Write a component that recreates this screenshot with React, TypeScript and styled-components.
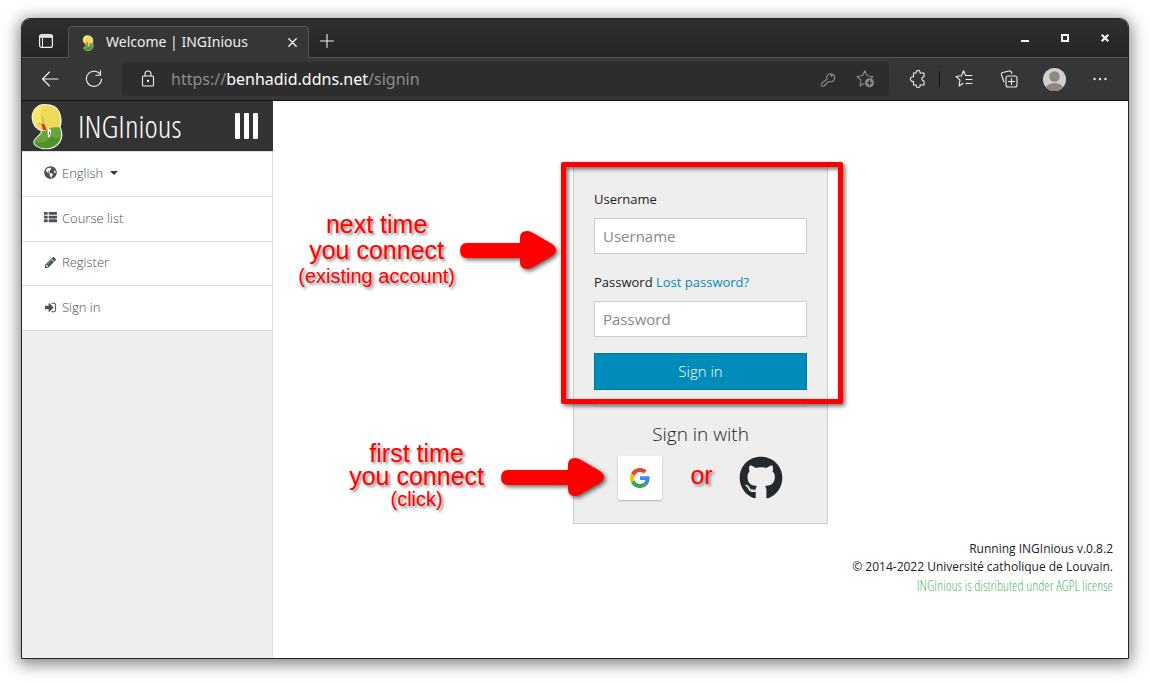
import React from 'react';
import styled, { createGlobalStyle } from 'styled-components';
import { FaGithub, FaGlobeAmericas } from 'react-icons/fa';

const Global = createGlobalStyle`
  *, *::before, *::after { box-sizing: border-box; }
  body { margin: 0; background: #fff; font-family: "Open Sans", sans-serif; font-size: 13px; color: #222; }
  button { font: inherit; color: inherit; background: none; border: 0; padding: 0; cursor: pointer; }
  a { text-decoration: none; color: inherit; }
  svg { display: block; flex: none; }
`;

const narrow = '"Open Sans Condensed Light", "Yanone Kaffeesatz", "Liberation Sans Narrow", "Open Sans", sans-serif';

const Desktop = styled.div`
  display: flex;
  min-height: 100vh;
  padding: 18px 21px 24px;
`;

const Window = styled.div`
  flex: 1;
  display: flex;
  flex-direction: column;
  border: 1px solid #242424;
  border-radius: 9px 9px 0 0;
  background: #fff;
  box-shadow: 0 3px 16px 2px rgba(0, 0, 0, 0.5);
`;

const TabBar = styled.div`
  display: flex;
  align-items: flex-end;
  height: 39px;
  padding: 0 5px 0 6px;
  border-bottom: 1px solid #555;
  border-radius: 8px 8px 0 0;
  background: linear-gradient(#2e2e2e, #262626);
  color: #eee;
`;

const TabAction = styled.button`
  display: flex;
  align-items: center;
  justify-content: center;
  width: 36px;
  height: 32px;
`;

const Tab = styled.div`
  display: flex;
  align-items: center;
  width: 241px;
  height: 32px;
  margin: 0 0 -1px 4px;
  padding: 0 11px 0 13px;
  border: 1px solid #555;
  border-bottom: 0;
  border-radius: 4px 4px 0 0;
  background: #363636;
  font: 14px "Noto Sans", sans-serif;
`;

const TabTitle = styled.span`
  flex: 1;
  padding: 0 0 2px 12px;
`;

const WindowControls = styled.div`
  display: flex;
  align-self: center;
  margin-left: auto;
  gap: 4px;
`;

const ControlButton = styled.button`
  display: flex;
  align-items: center;
  justify-content: center;
  width: 36px;
  height: 36px;
  color: #fff;
`;

const Toolbar = styled.div`
  display: flex;
  align-items: center;
  height: 43px;
  padding: 0 6px 0 10px;
  border-bottom: 1px solid #111;
  background: #363636;
  color: #eee;
`;

const ToolButton = styled.button<{ $w?: number }>`
  display: flex;
  align-items: center;
  justify-content: center;
  width: ${(p) => p.$w ?? 44}px;
  height: 34px;
`;

const AddressBar = styled.div`
  flex: 1;
  display: flex;
  align-items: center;
  height: 34px;
  margin: 0 7px 0 2px;
  padding-right: 5px;
  border-radius: 4px;
  background: #2d2d2d;
  color: #8c8c8c;
`;

const LockIcon = styled.span`
  padding: 0 16px 0 19px;
  color: #eee;
`;

const Address = styled.span`
  flex: 1;
  padding-bottom: 1px;
  font: 16px "Noto Sans", sans-serif;
  b { font-weight: 400; color: #fff; }
`;

const Divider = styled.span`
  width: 1px;
  height: 16px;
  background: #111;
`;

const Page = styled.div`
  flex: 1;
  display: flex;
`;

const Sidebar = styled.nav`
  width: 251px;
  flex: none;
  border-right: 1px solid #ddd;
  background: #eee;
`;

const Brand = styled.header`
  display: flex;
  align-items: center;
  height: 50px;
  margin-right: -1px;
  padding: 0 15px 0 8px;
  background: #333;
  color: #fff;
`;

const BrandName = styled.a`
  flex: 1;
  padding-left: 15px;
  font: 300 32px/44px ${narrow};
`;

const MenuButton = styled.button`
  display: flex;
  gap: 4px;
  span { width: 5px; height: 26px; border-radius: 1px; background: #fff; }
`;

const Menu = styled.ul`
  display: flex;
  flex-direction: column;
  height: 180px;
  margin: 0;
  padding: 0;
  list-style: none;
  border-top: 1px solid #ddd;
`;

const MenuItem = styled.li`
  flex: 1;
  display: flex;
  border-bottom: 1px solid #ddd;
  background: #fff;
`;

const MenuLink = styled.a`
  flex: 1;
  display: flex;
  align-items: center;
  gap: 5px;
  padding: 0 0 2px 22px;
  font-weight: 300;
  color: #495057;
`;

const Caret = styled.span`
  margin-left: 2px;
  border: 4px solid transparent;
  border-top-color: #343a40;
  border-bottom: 0;
`;

const Main = styled.main`
  flex: 1;
  display: flex;
  flex-direction: column;
  padding: 65px 15px 15px;
`;

const Panel = styled.section`
  position: relative;
  width: 255px;
  margin: 0 auto 16px;
  padding: 20px 20px 23px;
  border: 1px solid #ccc;
  background: #eee;
`;

const Field = styled.div`
  margin-bottom: 16px;
`;

const LabelRow = styled.div`
  height: 24px;
  line-height: 24px;
  margin-bottom: 7px;
  a { color: #008cba; }
`;

const Input = styled.input`
  display: block;
  width: 100%;
  height: 36px;
  padding: 0 8px;
  border: 1px solid #ccc;
  border-radius: 0;
  background: #fff;
  font: 15px "Open Sans", sans-serif;
  &::placeholder { color: #888; opacity: 1; }
`;

const SubmitButton = styled.button`
  display: block;
  width: 100%;
  height: 37px;
  padding-bottom: 2px;
  border: 1px solid #0079a1;
  background: #008cba;
  color: #fff;
  font-size: 15px;
  font-weight: 300;
`;

const Rule = styled.hr`
  margin: 16px 0 15px;
  border: 0;
  border-top: 1px solid #d5d5d5;
`;

const AltTitle = styled.h2`
  margin: 0 0 10px;
  text-align: center;
  font-size: 19px;
  line-height: 24px;
  font-weight: 300;
`;

const Providers = styled.div`
  display: flex;
  justify-content: space-between;
  padding: 0 24px;
`;

const Provider = styled.button<{ $tile?: boolean }>`
  display: flex;
  align-items: center;
  justify-content: center;
  width: 44px;
  height: 44px;
  border-radius: 2px;
  color: #24292e;
  background: ${(p) => (p.$tile ? '#fff' : 'none')};
  box-shadow: ${(p) => (p.$tile ? '0 1px 2px rgba(0,0,0,.25)' : 'none')};
`;

const Mark = styled.span`
  padding-left: 2px;
  font: 25px/38px "Liberation Sans", Arial, sans-serif;
  color: #f00;
  text-shadow: 2px 2px 3px rgba(0, 0, 0, 0.5);
`;

const Highlight = styled.div`
  position: absolute;
  top: -5px;
  left: -13px;
  width: 282px;
  height: 242px;
  border: 5px solid #f00;
  border-radius: 2px;
  filter: drop-shadow(2px 2px 2px rgba(0, 0, 0, 0.6));
  pointer-events: none;
`;

const Note = styled.div<{ $top: number; $right: number; $line: number }>`
  position: absolute;
  top: ${(p) => p.$top}px;
  right: ${(p) => p.$right}px;
  display: flex;
  align-items: center;
  white-space: nowrap;
  text-align: center;
  font: 25px/${(p) => p.$line}px "Liberation Sans", Arial, sans-serif;
  color: #f00;
  text-shadow: 2px 2px 3px rgba(0, 0, 0, 0.5);
  small { display: block; font-size: 20px; }
`;

const Arrow = styled.svg<{ $gap: number }>`
  margin-left: ${(p) => p.$gap}px;
  overflow: visible;
  filter: drop-shadow(2px 2px 2px rgba(0, 0, 0, 0.6));
`;

const Footer = styled.footer`
  text-align: right;
  font-size: 12px;
  line-height: 18px;
  a {
    color: #5ab878;
    font: 300 14px/20px ${narrow};
  }
`;

const Snake = ({ w, h }: { w: number; h: number }) => (
  <svg width={w} height={h} viewBox="0 0 32 46" aria-hidden="true">
    <g stroke="#fff" strokeWidth="2" strokeLinejoin="round">
      <path d="M14 2C7 2 2 8 2.500 15c.5 6 4 10 9.500 12l16-2c2-4 2.500-10 0-16-2-5-8-7-14-7z" fill="#efd95c" />
      <path d="M12 27c2 1 4 0 6-1 3-3 7-2 11-2 2 5 2 11-1 15-4 5-11 6-16 5-4-1-8-3-8-6 1-4 7-6 8-11z" fill="#66a63c" />
    </g>
    <path d="M14 2C7 2 2 8 2.500 15c.5 6 4 10 9.500 12l16-2c2-4 2.500-10 0-16-2-5-8-7-14-7z" fill="#efd95c" />
    <path d="M14 2C7 2 2 8 2.500 15c.5 3 2 5 4 7 1-2 3-2 6-1C8 14 9 7 14 2z" fill="#f9e76a" />
    <path d="M8 20c3 0 4 1 6 3M12 13c0 3 1 6 2 9" stroke="#b8922e" fill="none" strokeWidth=".8" />
    <path d="M12 27c2 1 4 0 6-1 3-3 7-2 11-2 2 5 2 11-1 15-4 5-11 6-16 5-4-1-8-3-8-6 1-4 7-6 8-11z" fill="#66a63c" />
    <path d="M4 38c7 2 13 0 17-6 2 3 5 3 8 2-2 6-6 9-11 10-6 1-13-1-14-6z" fill="#4f8f2e" />
    <path d="M11 20.500l3 .5 2.500 6-4-.5z" fill="#d8341c" />
    <path d="M17.500 26c2-1 3 0 3 2s-1 6-2 6-2-6-1-8z" fill="#fff" />
    <path d="M19 28v3" stroke="#333" strokeWidth=".8" />
  </svg>
);

const Glyph = ({ d }: { d: string }) => (
  <svg width="13" height="13" viewBox="0 0 1792 1792" fill="#495057" aria-hidden="true">
    <path d={d} />
  </svg>
);

const listPath =
  'M512 1248v192q0 40-28 68t-68 28h-320q-40 0-68-28t-28-68v-192q0-40 28-68t68-28h320q40 0 68 28t28 68zm0-512v192q0 40-28 68t-68 28h-320q-40 0-68-28t-28-68v-192q0-40 28-68t68-28h320q40 0 68 28t28 68zm1280 512v192q0 40-28 68t-68 28h-960q-40 0-68-28t-28-68v-192q0-40 28-68t68-28h960q40 0 68 28t28 68zm-1280-1024v192q0 40-28 68t-68 28h-320q-40 0-68-28t-28-68v-192q0-40 28-68t68-28h320q40 0 68 28t28 68zm1280 512v192q0 40-28 68t-68 28h-960q-40 0-68-28t-28-68v-192q0-40 28-68t68-28h960q40 0 68 28t28 68zm0-512v192q0 40-28 68t-68 28h-960q-40 0-68-28t-28-68v-192q0-40 28-68t68-28h960q40 0 68 28t28 68z';
const pencilPath =
  'M491 1536l91-91-235-235-91 91v107h128v128h107zm523-928q0-22-22-22-10 0-17 7l-542 542q-7 7-7 17 0 22 22 22 10 0 17-7l542-542q7-7 7-17zm-54-192l416 416-832 832h-416v-416zm683 96q0 53-37 90l-166 166-416-416 166-165q36-38 90-38 53 0 91 38l235 234q37 39 37 91z';
const signInPath =
  'M1312 896q0 26-19 45l-544 544q-19 19-45 19t-45-19-19-45v-288h-448q-26 0-45-19t-19-45v-384q0-26 19-45t45-19h448v-288q0-26 19-45t45-19 45 19l544 544q19 19 19 45zm352-352v704q0 119-84.5 203.5t-203.5 84.5h-320q-13 0-22.5-9.5t-9.5-22.5q0-4-1-20t-.5-26.5 3-23.5 10-19.5 20.5-6.5h320q66 0 113-47t47-113v-704q0-66-47-113t-113-47h-312l-11.5-1-11.5-3-8-5.5-7-9-2-13.5q0-4-1-20t-.5-26.5 3-23.5 10-19.5 20.5-6.5h320q119 0 203.5 84.5t84.5 203.5z';

const Line = ({ w = 18, h = 18, children }: { w?: number; h?: number; children: React.ReactNode }) => (
  <svg width={w} height={h} viewBox={`0 0 ${w} ${h}`} fill="none" stroke="currentColor" strokeWidth="1.1" strokeLinejoin="round" strokeLinecap="round" aria-hidden="true">
    {children}
  </svg>
);

const RedArrow = ({ gap, tail = 53 }: { gap: number; tail?: number }) => (
  <Arrow $gap={gap} width={tail + 43} height="38" fill="#f00" aria-hidden="true">
    <path d={`M7 12h${tail}v-5q0-7 7-7q3 0 6 2l19 11q8 6 0 12l-19 11q-3 2-6 2q-7 0-7-7v-4h-${tail}q-7 0-7-7.500q0-7.500 7-7.500z`} />
  </Arrow>
);

export default function App() {
  return (
    <Desktop>
      <Global />
      <Window>
        <TabBar>
          <TabAction aria-label="Tab actions">
            <svg width="14" height="14" viewBox="0 0 14 14" fill="none" stroke="#eee" strokeWidth="1.2">
              <rect x=".6" y=".6" width="12.800" height="12.800" rx="2" />
              <path d="M1 2.500h12" strokeWidth="2.500" />
              <path d="M3.500 4v9" strokeWidth="1" />
            </svg>
          </TabAction>
          <Tab>
            <Snake w={12} h={16} />
            <TabTitle>Welcome | INGInious</TabTitle>
            <button aria-label="Close tab">
              <Line w={9} h={9}><path d="M.8.8l7.400 7.400M8.200.8L.8 8.200" strokeWidth="1.400" /></Line>
            </button>
          </Tab>
          <TabAction aria-label="New tab">
            <Line w={14} h={14}><path d="M7 .5v13M.5 7h13" /></Line>
          </TabAction>
          <WindowControls>
            <ControlButton aria-label="Minimize">
              <svg width="8" height="8"><path d="M0 6h8v2H0z" fill="#fff" /></svg>
            </ControlButton>
            <ControlButton aria-label="Maximize">
              <svg width="8" height="8"><rect x="1" y="1" width="6" height="6" fill="none" stroke="#fff" strokeWidth="2" /></svg>
            </ControlButton>
            <ControlButton aria-label="Close">
              <svg width="8" height="8"><path d="M.7.7l6.600 6.600M7.300.7L.7 7.300" stroke="#fff" strokeWidth="2" /></svg>
            </ControlButton>
          </WindowControls>
        </TabBar>
        <Toolbar>
          <ToolButton aria-label="Back" $w={36}>
            <Line><path d="M17 9H1.500M8.500 2L1.500 9l7 7" /></Line>
          </ToolButton>
          <ToolButton aria-label="Reload" $w={52}>
            <Line><path d="M14.500 3.500A7.600 7.600 0 1 0 16.600 9M15.500.8v4.500h-4.500" /></Line>
          </ToolButton>
          <AddressBar>
            <LockIcon>
              <Line w={14} h={18}><rect x="1.500" y="6" width="11" height="10" rx="1" /><path d="M4 6V4a3 3 0 0 1 6 0v2" /><circle cx="7" cy="11" r=".6" fill="currentColor" /></Line>
            </LockIcon>
            <Address>https://<b>benhadid.ddns.net</b>/signin</Address>
            <ToolButton $w={36} aria-label="Saved passwords">
              <Line w={16} h={16}><path d="M7 8.200a4 4 0 1 1 2.700 2.400L8 11 4.500 14.500Q3 16 1.800 14.800T2 12z" /><circle cx="11.500" cy="4.500" r=".6" fill="currentColor" /></Line>
            </ToolButton>
            <ToolButton $w={38} aria-label="Add to favourites">
              <Line><path d="M8 13.500L4 16l1-5.800L1 6.500l5.500-.8L8.800.8l2.400 4.900 5.600.8-1.500 1.500" /><circle cx="13.500" cy="12.800" r="4.500" fill="currentColor" stroke="none" /><path d="M13.500 10.500v4.600M11.200 12.800h4.600" stroke="#2d2d2d" strokeWidth="1.300" /></Line>
            </ToolButton>
          </AddressBar>
          <ToolButton aria-label="Extensions" $w={43}>
            <Line><path d="M4.500 3h2.700a2 2 0 1 1 3.800 0H15v3.800a1.800 1.800 0 1 0 0 4.200V15h-4a2 2 0 1 1-3.800 0H4.500v-3.600a2.400 2.400 0 1 1 0-4.600z" /></Line>
          </ToolButton>
          <Divider />
          <ToolButton $w={48} aria-label="Favourites">
            <Line><path d="M8 13.500L4 16l1-5.800L1 6.500l5.500-.8L8.500.8l2.200 4.700H17M11 9.500h6M11 13.500h6" /></Line>
          </ToolButton>
          <ToolButton $w={42} aria-label="Collections">
            <Line><rect x="6" y="6" width="11" height="11" rx="2" /><path d="M11.500 8.500v6M8.500 11.500h6M4 12L1.500 5a2 2 0 0 1 1.200-2.500L9 1q2-.5 3 2.500" /></Line>
          </ToolButton>
          <ToolButton $w={48} aria-label="Profile">
            <svg width="23" height="23" viewBox="0 0 23 23">
              <clipPath id="avatar"><circle cx="11.500" cy="11.500" r="11.500" /></clipPath>
              <g clipPath="url(#avatar)"><path d="M0 0h23v23H0z" fill="#d2d0ce" /><circle cx="11.500" cy="8.500" r="5.300" fill="#8d8783" /><ellipse cx="11.500" cy="20.500" rx="8.500" ry="5.500" fill="#8d8783" /></g>
            </svg>
          </ToolButton>
          <ToolButton aria-label="Settings and more" $w={44}>
            <svg width="14" height="4" fill="#eee"><circle cx="1.500" cy="2" r="1.200" /><circle cx="7" cy="2" r="1.200" /><circle cx="12.500" cy="2" r="1.200" /></svg>
          </ToolButton>
        </Toolbar>
        <Page>
          <Sidebar>
            <Brand>
              <Snake w={33} h={47} />
              <BrandName href="#">INGInious</BrandName>
              <MenuButton aria-label="Toggle menu"><span /><span /><span /></MenuButton>
            </Brand>
            <Menu>
              <MenuItem><MenuLink href="#"><FaGlobeAmericas size={13} />English <Caret /></MenuLink></MenuItem>
              <MenuItem><MenuLink href="#"><Glyph d={listPath} />Course list</MenuLink></MenuItem>
              <MenuItem><MenuLink href="#"><Glyph d={pencilPath} />Register</MenuLink></MenuItem>
              <MenuItem><MenuLink href="#"><Glyph d={signInPath} />Sign in</MenuLink></MenuItem>
            </Menu>
          </Sidebar>
          <Main>
            <Panel>
              <Field>
                <LabelRow><label htmlFor="username">Username</label></LabelRow>
                <Input id="username" placeholder="Username" />
              </Field>
              <Field>
                <LabelRow><label htmlFor="password">Password</label> <a href="#">Lost password?</a></LabelRow>
                <Input id="password" type="password" placeholder="Password" />
              </Field>
              <SubmitButton>Sign in</SubmitButton>
              <Rule />
              <AltTitle>Sign in with</AltTitle>
              <Providers>
                <Provider $tile aria-label="Google">
                  <svg width="20" height="20" viewBox="0 0 48 48">
                    <path fill="#EA4335" d="M24 9.500c3.540 0 6.710 1.220 9.210 3.600l6.850-6.850C35.900 2.380 30.470 0 24 0 14.620 0 6.510 5.380 2.560 13.220l7.980 6.190C12.430 13.720 17.740 9.500 24 9.500z" />
                    <path fill="#4285F4" d="M46.980 24.550c0-1.570-.15-3.090-.38-4.550H24v9.020h12.940c-.58 2.960-2.260 5.480-4.780 7.180l7.730 6c4.510-4.180 7.090-10.360 7.090-17.650z" />
                    <path fill="#FBBC05" d="M10.530 28.590c-.48-1.450-.76-2.990-.76-4.590s.27-3.140.76-4.590l-7.980-6.190C.92 16.460 0 20.120 0 24c0 3.880.92 7.540 2.560 10.780l7.970-6.190z" />
                    <path fill="#34A853" d="M24 48c6.480 0 11.930-2.130 15.890-5.810l-7.730-6c-2.150 1.450-4.920 2.300-8.160 2.300-6.260 0-11.570-4.220-13.470-9.910l-7.980 6.190C6.510 42.620 14.620 48 24 48z" />
                  </svg>
                </Provider>
                <Mark>or</Mark>
                <Provider aria-label="GitHub"><FaGithub size={44} /></Provider>
              </Providers>
              <Highlight />
              <Note $top={44} $right={271} $line={26}>
                <div>next time<br />you connect<small>(existing account)</small></div>
                <RedArrow gap={5} />
              </Note>
              <Note $top={275} $right={223} $line={23}>
                <div>first time<br />you connect<small>(click)</small></div>
                <RedArrow gap={17} tail={60} />
              </Note>
            </Panel>
            <Footer>
              <div>Running INGInious v.0.8.2</div>
              <div>© 2014-2022 Université catholique de Louvain.</div>
              <a href="#">INGInious is distributed under AGPL license</a>
            </Footer>
          </Main>
        </Page>
      </Window>
    </Desktop>
  );
}
